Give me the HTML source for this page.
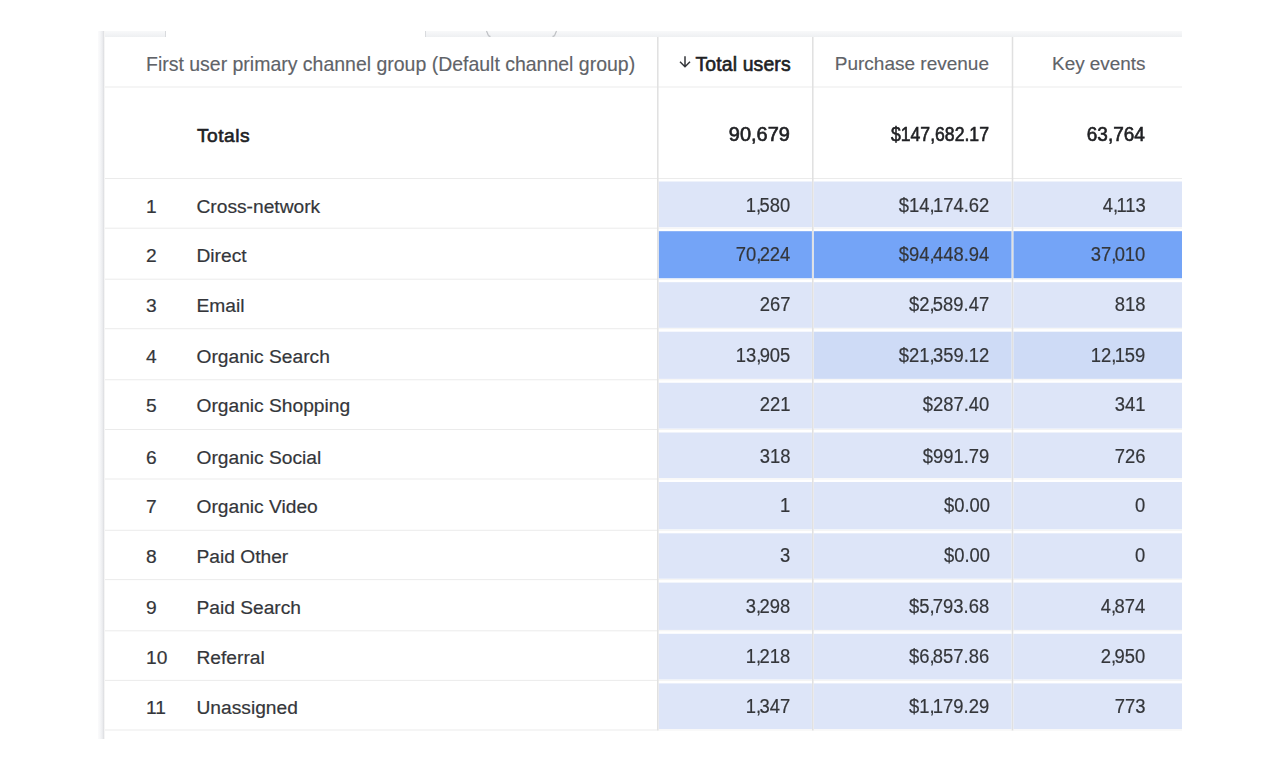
<!DOCTYPE html><html><head><meta charset="utf-8"><style>
html,body{margin:0;padding:0;background:#fff;width:1280px;height:769px;overflow:hidden;position:relative;font-family:"Liberation Sans", sans-serif;}
.a{position:absolute;}
.t{position:absolute;white-space:nowrap;line-height:20px;height:20px;font-size:19.2px;color:#34363a;-webkit-text-stroke:0.2px #34363a;}
.g{-webkit-text-stroke:0.15px #5f6368;}
.n{font-size:20px;transform:scaleX(0.92);transform-origin:right center;}
.c{letter-spacing:-1.85px;}
.hl{position:absolute;height:1px;background:#ebebeb;}
.vl{position:absolute;width:1px;background:#e0e0e0;}
.med{-webkit-text-stroke:0.6px #202124;color:#202124;}

</style></head><body>
<div class="a" style="left:98px;top:31px;width:68px;height:6px;background:linear-gradient(#f8f9fa,#eef0f2)"></div>
<div class="a" style="left:165px;top:31px;width:1px;height:6px;background:#d9dbde"></div>
<div class="a" style="left:425px;top:31px;width:757px;height:6px;background:linear-gradient(#f8f9fa,#eef0f2)"></div>
<div class="a" style="left:425px;top:31px;width:1px;height:6px;background:#d9dbde"></div>
<svg class="a" style="left:480px;top:29px" width="90" height="10" viewBox="0 0 90 10"><path d="M6.5 2L8.3 6.3Q9 7.3 10.5 7.3M76.5 2L74.7 6.3Q74 7.3 72.5 7.3" fill="none" stroke="#9a9da2" stroke-width="1.2" opacity="0.6" style="filter:blur(0.4px)"/></svg>
<div class="a" style="left:98px;top:31px;width:7px;height:708px;background:linear-gradient(90deg,#fbfbfc,#f3f4f6 40%,#e8e9ec 70%,#dfe0e3 80%,#f4f4f4 92%,#fff)"></div>
<svg class="a" style="left:0;top:0" width="1280" height="769" viewBox="0 0 1280 769"><rect x="658.6999999999999" y="181.50" width="153.20" height="45.80" fill="#dde5f8"/><rect x="813.6999999999999" y="181.50" width="197.90" height="45.80" fill="#dde5f8"/><rect x="1013.4" y="181.50" width="168.60" height="45.80" fill="#dde5f8"/><rect x="658.6999999999999" y="231.20" width="153.20" height="47.10" fill="#74a4f7"/><rect x="813.6999999999999" y="231.20" width="197.90" height="47.10" fill="#74a4f7"/><rect x="1013.4" y="231.20" width="168.60" height="47.10" fill="#74a4f7"/><rect x="658.6999999999999" y="282.20" width="153.20" height="45.60" fill="#dde5f8"/><rect x="813.6999999999999" y="282.20" width="197.90" height="45.60" fill="#dde5f8"/><rect x="1013.4" y="282.20" width="168.60" height="45.60" fill="#dde5f8"/><rect x="658.6999999999999" y="331.70" width="153.20" height="47.15" fill="#dde5f8"/><rect x="813.6999999999999" y="331.70" width="197.90" height="47.15" fill="#cedbf6"/><rect x="1013.4" y="331.70" width="168.60" height="47.15" fill="#cedbf6"/><rect x="658.6999999999999" y="382.75" width="153.20" height="45.85" fill="#dde5f8"/><rect x="813.6999999999999" y="382.75" width="197.90" height="45.85" fill="#dde5f8"/><rect x="1013.4" y="382.75" width="168.60" height="45.85" fill="#dde5f8"/><rect x="658.6999999999999" y="432.50" width="153.20" height="45.60" fill="#dde5f8"/><rect x="813.6999999999999" y="432.50" width="197.90" height="45.60" fill="#dde5f8"/><rect x="1013.4" y="432.50" width="168.60" height="45.60" fill="#dde5f8"/><rect x="658.6999999999999" y="482.00" width="153.20" height="47.40" fill="#dde5f8"/><rect x="813.6999999999999" y="482.00" width="197.90" height="47.40" fill="#dde5f8"/><rect x="1013.4" y="482.00" width="168.60" height="47.40" fill="#dde5f8"/><rect x="658.6999999999999" y="533.30" width="153.20" height="45.40" fill="#dde5f8"/><rect x="813.6999999999999" y="533.30" width="197.90" height="45.40" fill="#dde5f8"/><rect x="1013.4" y="533.30" width="168.60" height="45.40" fill="#dde5f8"/><rect x="658.6999999999999" y="582.60" width="153.20" height="47.30" fill="#dde5f8"/><rect x="813.6999999999999" y="582.60" width="197.90" height="47.30" fill="#dde5f8"/><rect x="1013.4" y="582.60" width="168.60" height="47.30" fill="#dde5f8"/><rect x="658.6999999999999" y="633.80" width="153.20" height="45.70" fill="#dde5f8"/><rect x="813.6999999999999" y="633.80" width="197.90" height="45.70" fill="#dde5f8"/><rect x="1013.4" y="633.80" width="168.60" height="45.70" fill="#dde5f8"/><rect x="658.6999999999999" y="683.40" width="153.20" height="45.70" fill="#dde5f8"/><rect x="813.6999999999999" y="683.40" width="197.90" height="45.70" fill="#dde5f8"/><rect x="1013.4" y="683.40" width="168.60" height="45.70" fill="#dde5f8"/><rect x="105" y="86.5" width="1077" height="1" fill="#ebebeb"/><rect x="105" y="178.00" width="552.3" height="1" fill="#ebebeb"/><rect x="657.3" y="178.00" width="524.7" height="1" fill="#ebebeb"/><rect x="105" y="227.70" width="552.3" height="1" fill="#ebebeb"/><rect x="657.3" y="227.70" width="524.7" height="1" fill="#f3f3f3"/><rect x="105" y="278.70" width="552.3" height="1" fill="#ebebeb"/><rect x="657.3" y="278.70" width="524.7" height="1" fill="#f3f3f3"/><rect x="105" y="328.20" width="552.3" height="1" fill="#ebebeb"/><rect x="657.3" y="328.20" width="524.7" height="1" fill="#f3f3f3"/><rect x="105" y="379.25" width="552.3" height="1" fill="#ebebeb"/><rect x="657.3" y="379.25" width="524.7" height="1" fill="#f3f3f3"/><rect x="105" y="429.00" width="552.3" height="1" fill="#ebebeb"/><rect x="657.3" y="429.00" width="524.7" height="1" fill="#f3f3f3"/><rect x="105" y="478.50" width="552.3" height="1" fill="#ebebeb"/><rect x="657.3" y="478.50" width="524.7" height="1" fill="#f3f3f3"/><rect x="105" y="529.80" width="552.3" height="1" fill="#ebebeb"/><rect x="657.3" y="529.80" width="524.7" height="1" fill="#f3f3f3"/><rect x="105" y="579.10" width="552.3" height="1" fill="#ebebeb"/><rect x="657.3" y="579.10" width="524.7" height="1" fill="#f3f3f3"/><rect x="105" y="630.30" width="552.3" height="1" fill="#ebebeb"/><rect x="657.3" y="630.30" width="524.7" height="1" fill="#f3f3f3"/><rect x="105" y="679.90" width="552.3" height="1" fill="#ebebeb"/><rect x="657.3" y="679.90" width="524.7" height="1" fill="#f3f3f3"/><rect x="105" y="729.50" width="552.3" height="1" fill="#ebebeb"/><rect x="657.3" y="729.50" width="524.7" height="1" fill="#f3f3f3"/><rect x="657.05" y="37" width="1.5" height="693.5" fill="#e0e0e0"/><rect x="812.05" y="37" width="1.5" height="693.5" fill="#e0e0e0"/><rect x="1011.75" y="37" width="1.5" height="693.5" fill="#e0e0e0"/></svg>
<div class="t g" style="left:146px;top:54.05px;font-size:19.48px;color:#5f6368">First user primary channel group (Default channel group)</div>
<div class="t med" style="right:489.20000000000005px;top:53.68px;font-size:19.4px;letter-spacing:0.15px">Total users</div>
<svg class="a" style="left:678px;top:55px" width="14" height="14" viewBox="0 0 14 14"><path d="M7 1.2V12M2 6.8L7 11.8L12 6.8" fill="none" stroke="#34363a" stroke-width="1.5"/></svg>
<div class="t g" style="right:291px;top:54.22px;font-size:19.0px;color:#5f6368">Purchase revenue</div>
<div class="t g" style="right:134.5px;top:54.25px;font-size:18.9px;color:#5f6368">Key events</div>
<div class="t med" style="left:197px;top:126.35px;letter-spacing:0.5px">Totals</div>
<div class="t med" style="right:489.70000000000005px;top:124.21px;font-size:19.6px;transform:scaleX(1.02);transform-origin:right">90,679</div>
<div class="t med" style="right:291px;top:124.21px;font-size:19.6px;transform:scaleX(0.9);transform-origin:right">$147,682.17</div>
<div class="t med" style="right:135px;top:124.21px;font-size:19.6px;transform:scaleX(0.97);transform-origin:right">63,764</div>
<div class="t" style="left:146px;top:196.75px">1</div>
<div class="t" style="left:196.5px;top:196.75px">Cross-network</div>
<div class="t n" style="right:489.70000000000005px;top:194.87px">1<span class="c">,</span>580</div>
<div class="t n" style="right:290.4px;top:194.87px">$14<span class="c">,</span>174.62</div>
<div class="t n" style="right:134.4000000000001px;top:194.87px">4<span class="c">,</span>113</div>
<div class="t" style="left:146px;top:246.25px">2</div>
<div class="t" style="left:196.5px;top:246.25px">Direct</div>
<div class="t n" style="right:489.70000000000005px;top:244.37px">70<span class="c">,</span>224</div>
<div class="t n" style="right:290.4px;top:244.37px">$94<span class="c">,</span>448.94</div>
<div class="t n" style="right:134.4000000000001px;top:244.37px">37<span class="c">,</span>010</div>
<div class="t" style="left:146px;top:295.65px">3</div>
<div class="t" style="left:196.5px;top:295.65px">Email</div>
<div class="t n" style="right:489.70000000000005px;top:293.77px">267</div>
<div class="t n" style="right:290.4px;top:293.77px">$2<span class="c">,</span>589.47</div>
<div class="t n" style="right:134.4000000000001px;top:293.77px">818</div>
<div class="t" style="left:146px;top:346.75px">4</div>
<div class="t" style="left:196.5px;top:346.75px">Organic Search</div>
<div class="t n" style="right:489.70000000000005px;top:344.87px">13<span class="c">,</span>905</div>
<div class="t n" style="right:290.4px;top:344.87px">$21<span class="c">,</span>359.12</div>
<div class="t n" style="right:134.4000000000001px;top:344.87px">12<span class="c">,</span>159</div>
<div class="t" style="left:146px;top:396.25px">5</div>
<div class="t" style="left:196.5px;top:396.25px">Organic Shopping</div>
<div class="t n" style="right:489.70000000000005px;top:394.37px">221</div>
<div class="t n" style="right:290.4px;top:394.37px">$287.40</div>
<div class="t n" style="right:134.4000000000001px;top:394.37px">341</div>
<div class="t" style="left:146px;top:447.85px">6</div>
<div class="t" style="left:196.5px;top:447.85px">Organic Social</div>
<div class="t n" style="right:489.70000000000005px;top:445.97px">318</div>
<div class="t n" style="right:290.4px;top:445.97px">$991.79</div>
<div class="t n" style="right:134.4000000000001px;top:445.97px">726</div>
<div class="t" style="left:146px;top:497.35px">7</div>
<div class="t" style="left:196.5px;top:497.35px">Organic Video</div>
<div class="t n" style="right:489.70000000000005px;top:495.47px">1</div>
<div class="t n" style="right:290.4px;top:495.47px">$0.00</div>
<div class="t n" style="right:134.4000000000001px;top:495.47px">0</div>
<div class="t" style="left:146px;top:546.75px">8</div>
<div class="t" style="left:196.5px;top:546.75px">Paid Other</div>
<div class="t n" style="right:489.70000000000005px;top:544.87px">3</div>
<div class="t n" style="right:290.4px;top:544.87px">$0.00</div>
<div class="t n" style="right:134.4000000000001px;top:544.87px">0</div>
<div class="t" style="left:146px;top:597.85px">9</div>
<div class="t" style="left:196.5px;top:597.85px">Paid Search</div>
<div class="t n" style="right:489.70000000000005px;top:595.97px">3<span class="c">,</span>298</div>
<div class="t n" style="right:290.4px;top:595.97px">$5<span class="c">,</span>793.68</div>
<div class="t n" style="right:134.4000000000001px;top:595.97px">4<span class="c">,</span>874</div>
<div class="t" style="left:146px;top:647.85px">10</div>
<div class="t" style="left:196.5px;top:647.85px">Referral</div>
<div class="t n" style="right:489.70000000000005px;top:645.97px">1<span class="c">,</span>218</div>
<div class="t n" style="right:290.4px;top:645.97px">$6<span class="c">,</span>857.86</div>
<div class="t n" style="right:134.4000000000001px;top:645.97px">2<span class="c">,</span>950</div>
<div class="t" style="left:146px;top:698.35px">11</div>
<div class="t" style="left:196.5px;top:698.35px">Unassigned</div>
<div class="t n" style="right:489.70000000000005px;top:696.47px">1<span class="c">,</span>347</div>
<div class="t n" style="right:290.4px;top:696.47px">$1<span class="c">,</span>179.29</div>
<div class="t n" style="right:134.4000000000001px;top:696.47px">773</div>
</body></html>
